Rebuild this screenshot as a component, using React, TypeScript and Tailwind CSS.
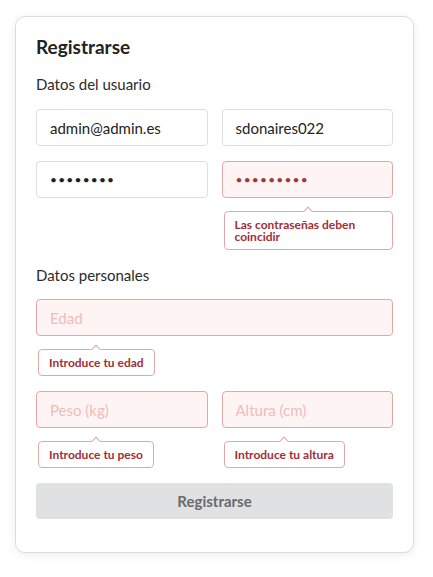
const FONT = { fontFamily: "Lato, 'Open Sans', sans-serif" };

function Tip({ text, full = false }: { text: string; full?: boolean }) {
  return (
    <div
      className={`relative mt-[13px] ml-[2px] rounded-[4px] border border-[#e2a7a7] bg-white px-[10px] pt-[7px] pb-[6px] text-[12px] font-bold leading-[12px] text-[#9f2f35] ${
        full ? "" : "w-fit"
      }`}
    >
      {text}
      <span className="absolute left-1/2 top-[-4px] h-[7px] w-[7px] -translate-x-1/2 rotate-45 border-l border-t border-[#e2a7a7] bg-white" />
    </div>
  );
}

function Field({
  value,
  placeholder,
  type = "text",
  error = false,
}: {
  value?: string;
  placeholder?: string;
  type?: string;
  error?: boolean;
}) {
  const isPass = type === "password";
  return (
    <input
      type={type}
      defaultValue={value}
      placeholder={placeholder}
      className={`h-[37px] w-full rounded-[4px] border px-[13px] outline-none ${
        isPass ? "text-[12px] tracking-[1.2px]" : "text-[15px]"
      } ${
        error
          ? "border-[#e2a7a7] bg-[#fff4f4] text-[#a2363b] placeholder:text-[#edbcbc]"
          : "border-[#dedede] bg-white text-[#222]"
      }`}
      style={FONT}
    />
  );
}

export default function App() {
  return (
    <div className="min-h-[577px] bg-white pt-4 pl-[15px]" style={FONT}>
      <div className="w-[399px] rounded-[10px] border border-[#dcdcdc] bg-white px-5 pt-[18px] pb-[33px] shadow-[0_2px_10px_rgba(0,0,0,0.07)]">
        <h1 className="mb-4 text-[19px] font-bold leading-[24px] text-[#222]">Registrarse</h1>

        <div className="mb-4 text-[15px] leading-[18px] text-[#2b2b2b]">Datos del usuario</div>
        <div className="grid grid-cols-2 gap-x-[14px] gap-y-[15px]">
          <Field value="admin@admin.es" />
          <Field value="sdonaires022" />
          <div>
            <Field type="password" value="12345678" />
          </div>
          <div>
            <Field type="password" value="123456789" error />
            <Tip text="Las contraseñas deben coincidir" full />
          </div>
        </div>

        <div className="mt-4 mb-[15px] text-[15px] leading-[18px] text-[#2b2b2b]">Datos personales</div>
        <div className="flex flex-col gap-[15px]">
          <div>
            <Field placeholder="Edad" error />
            <Tip text="Introduce tu edad" />
          </div>
          <div className="grid grid-cols-2 gap-x-[14px]">
            <div>
              <Field placeholder="Peso (kg)" error />
              <Tip text="Introduce tu peso" />
            </div>
            <div>
              <Field placeholder="Altura (cm)" error />
              <Tip text="Introduce tu altura" />
            </div>
          </div>
          <button className="h-[36px] w-full rounded-[4px] bg-[#e0e1e3] text-[15px] font-bold text-[#6a6a6a]">
            Registrarse
          </button>
        </div>
      </div>
    </div>
  );
}
